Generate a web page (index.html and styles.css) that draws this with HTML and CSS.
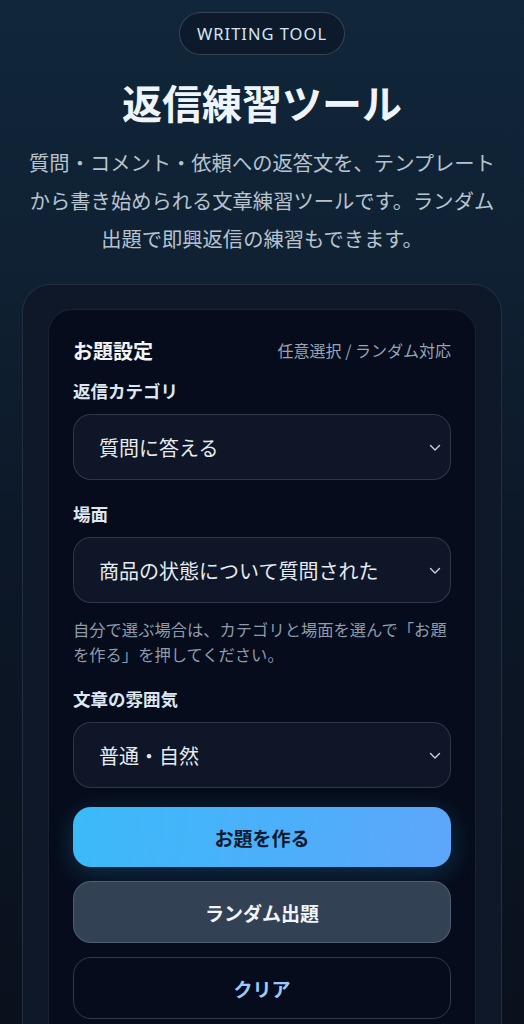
FILE: index.html
```html
<!DOCTYPE html>
<html lang="ja">
<head>
    <meta charset="UTF-8">
    <meta name="viewport" content="width=device-width, initial-scale=1.0">
    <title>返信練習ツール</title>
    <link rel="stylesheet" href="styles.css">
</head>
<body>
    <header class="hero">
        <span class="badge">WRITING TOOL</span>
        <h1 class="title">返信練習ツール</h1>
        <p class="lead">質問・コメント・依頼への返答文を、テンプレートから書き始められる文章練習ツールです。ランダム出題で即興返信の練習もできます。</p>
    </header>

    <main class="shell">
        <section class="panel">
            <div class="panel-head">
                <h2>お題設定</h2>
                <span class="panel-note">任意選択 / ランダム対応</span>
            </div>

            <div class="field">
                <label for="category">返信カテゴリ</label>
                <div class="select-wrap">
                    <select id="category">
                        <option>質問に答える</option>
                        <option>コメントに返す</option>
                        <option>依頼に応える</option>
                    </select>
                    <svg class="chev" width="12" height="8" viewBox="0 0 12 8"><path d="M1.5 1.5 6 6l4.5-4.5" fill="none" stroke="#cbd5e1" stroke-width="1.4" stroke-linecap="round" stroke-linejoin="round"/></svg>
                </div>
            </div>

            <div class="field">
                <label for="scene">場面</label>
                <div class="select-wrap">
                    <select id="scene">
                        <option>商品の状態について質問された</option>
                        <option>発送日について質問された</option>
                    </select>
                    <svg class="chev" width="12" height="8" viewBox="0 0 12 8"><path d="M1.5 1.5 6 6l4.5-4.5" fill="none" stroke="#cbd5e1" stroke-width="1.4" stroke-linecap="round" stroke-linejoin="round"/></svg>
                </div>
            </div>

            <p class="hint">自分で選ぶ場合は、カテゴリと場面を選んで「お題を作る」を押してください。</p>

            <div class="field">
                <label for="tone">文章の雰囲気</label>
                <div class="select-wrap">
                    <select id="tone">
                        <option>普通・自然</option>
                        <option>丁寧</option>
                        <option>カジュアル</option>
                    </select>
                    <svg class="chev" width="12" height="8" viewBox="0 0 12 8"><path d="M1.5 1.5 6 6l4.5-4.5" fill="none" stroke="#cbd5e1" stroke-width="1.4" stroke-linecap="round" stroke-linejoin="round"/></svg>
                </div>
            </div>

            <div class="actions">
                <button type="button" class="btn btn-primary">お題を作る</button>
                <button type="button" class="btn btn-secondary">ランダム出題</button>
                <button type="button" class="btn btn-ghost">クリア</button>
            </div>
        </section>
    </main>
</body>
</html>
```

FILE: styles.css
```css
* {
    box-sizing: border-box;
}
body {
    margin: 0;
    min-height: 1024px;
    font-family: "Noto Sans CJK JP", "Noto Sans", sans-serif;
    color: #e2e8f0;
    background: linear-gradient(180deg, #11263a 0%, #0f2133 25%, #0c1727 55%, #0a111d 100%);
}
.hero {
    text-align: center;
    padding: 12px 26px 0;
}
.badge {
    display: inline-block;
    height: 43px;
    line-height: 41px;
    padding: 0 17px;
    border: 1px solid rgba(148, 163, 184, 0.3);
    border-radius: 999px;
    background: #0d1a2b;
    color: #d3e6f5;
    font-family: "Noto Sans", sans-serif;
    font-size: 16.5px;
    letter-spacing: 1px;
}
.title {
    margin: 22px 0 0;
    font-size: 40px;
    line-height: 50px;
    font-weight: 700;
    color: #eef4fa;
}
.lead {
    margin: 16px 0 0;
    font-size: 20.3px;
    line-height: 38px;
    color: #b7c3cf;
}
.shell {
    margin: 27px 22px 0;
    padding: 24px 25px 0;
    border: 1px solid rgba(148, 163, 184, 0.16);
    border-bottom: none;
    border-radius: 28px 28px 0 0;
    background: #0f1828;
}
.panel {
    padding: 24px 24px 8px;
    border: 1px solid rgba(148, 163, 184, 0.14);
    border-bottom: none;
    border-radius: 24px 24px 0 0;
    background: #060c1b;
}
.panel-head {
    display: flex;
    justify-content: space-between;
    align-items: center;
    height: 32px;
    margin-bottom: 13px;
}
.panel-head h2 {
    margin: 0;
    font-size: 20px;
    font-weight: 700;
    color: #f1f5f9;
}
.panel-note {
    font-size: 16px;
    color: #98a5b4;
}
.field {
    display: flex;
    flex-direction: column;
    gap: 11px;
    margin-bottom: 22px;
}
.field label {
    font-size: 17.5px;
    line-height: 24px;
    font-weight: 700;
    color: #dde7f1;
}
.select-wrap {
    position: relative;
}
.select-wrap select {
    appearance: none;
    width: 100%;
    height: 66px;
    padding: 0 40px 0 25px;
    border: 1px solid rgba(148, 163, 184, 0.24);
    border-radius: 18px;
    background: #0e1627;
    color: #e5ebf2;
    font-family: inherit;
    font-size: 20px;
}
.chev {
    position: absolute;
    right: 10px;
    top: 30px;
    pointer-events: none;
}
.hint {
    margin: -8px 0 20px;
    font-size: 16.3px;
    line-height: 25px;
    color: #8e9bab;
}
.actions {
    display: flex;
    flex-direction: column;
    gap: 14px;
    margin-top: -3px;
}
.btn {
    width: 100%;
    height: 62px;
    border-radius: 18px;
    font-family: inherit;
    font-size: 19px;
    font-weight: 700;
    cursor: pointer;
}
.btn-primary {
    height: 60px;
    border: none;
    background: linear-gradient(100deg, #3bbaf9 0%, #4eaefa 60%, #5ea6f9 100%);
    color: #0c1b2e;
    box-shadow: 0 6px 26px rgba(56, 189, 248, 0.22);
}
.btn-secondary {
    border: 1px solid rgba(148, 163, 184, 0.3);
    background: #334155;
    color: #f1f5f9;
}
.btn-ghost {
    border: 1px solid rgba(148, 163, 184, 0.3);
    background: transparent;
    color: #9cc8fb;
}
```
